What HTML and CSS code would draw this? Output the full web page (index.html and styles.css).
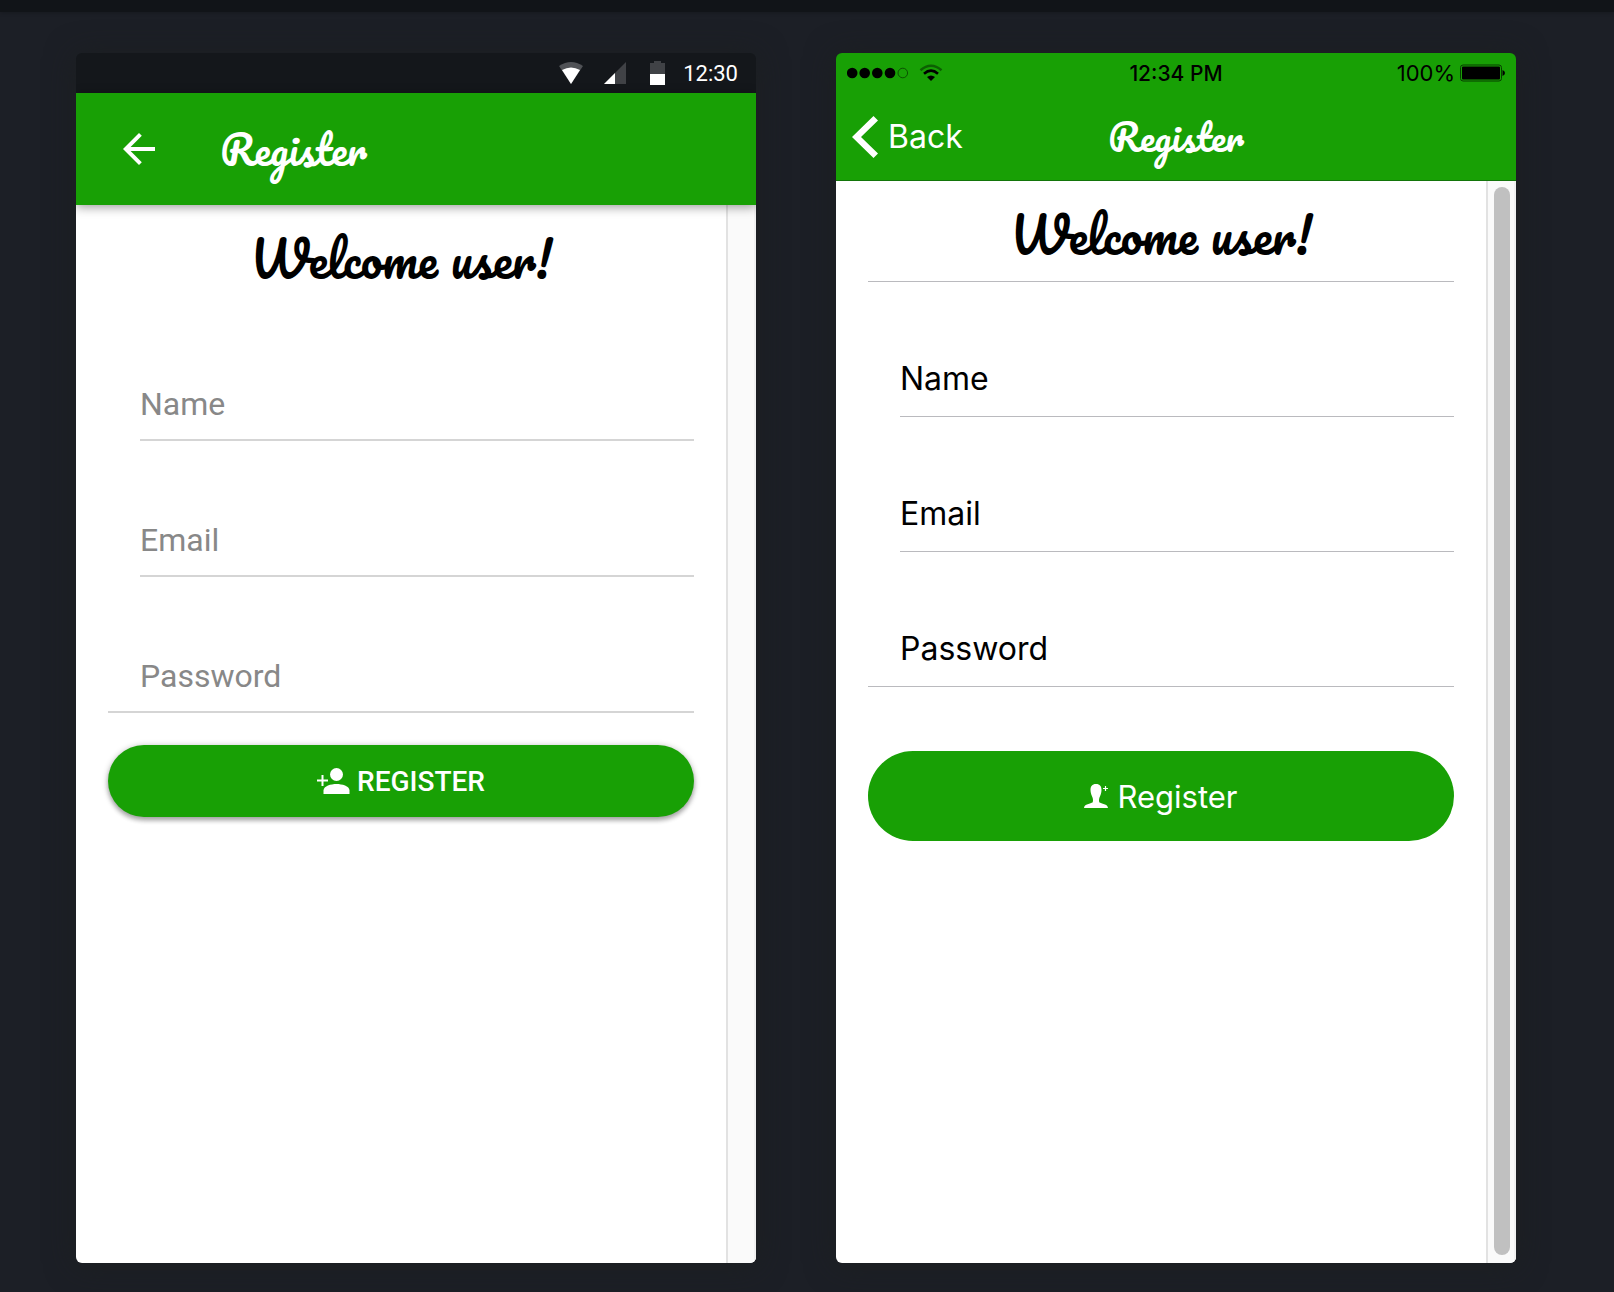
FILE: index.html
```html
<!DOCTYPE html>
<html lang="en">
<head>
    <meta charset="UTF-8">
    <meta name="viewport" content="width=device-width, initial-scale=1.0">
    <title>Register</title>
    <link rel="stylesheet" href="styles.css">
</head>
<body>
    <div class="topbar"></div>

    <main class="preview">
        <!-- Android -->
        <section class="phone android">
            <div class="status-bar">
                <svg class="status-wifi" width="26" height="24" viewBox="0 0 26 24">
                    <path d="M13 23 L1 5 Q13 -3 25 5 Z" fill="#505256"/>
                    <path d="M13 23 L4 9 Q13 4 22 9 Z" fill="#fff"/>
                </svg>
                <svg class="status-signal" width="22" height="22" viewBox="0 0 22 22">
                    <path d="M0 22 L22 0 V22 Z" fill="#404246"/>
                    <path d="M0 22 L11 11 V22 Z" fill="#fff"/>
                </svg>
                <svg class="status-battery" width="15" height="24" viewBox="0 0 15 24">
                    <path d="M0 2 H4 V0 H11 V2 H15 V13 H0 Z" fill="#404246"/>
                    <path d="M0 13 H15 V24 H0 Z" fill="#fff"/>
                </svg>
                <span class="status-time">12:30</span>
            </div>

            <header class="toolbar">
                <button type="button" class="back-button" aria-label="Back">
                    <svg width="48" height="48" viewBox="0 0 24 24">
                        <path d="M20 11H7.8l5.6-5.6L12 4l-8 8 8 8 1.4-1.4L7.8 13H20v-2z" fill="#fff"/>
                    </svg>
                </button>
                <h1 class="toolbar-title">Register</h1>
            </header>

            <div class="page">
                <form class="content">
                    <h2 class="welcome">Welcome user!</h2>
                    <div class="field">
                        <label for="md-name">Name</label>
                        <input type="text" id="md-name">
                    </div>
                    <div class="field">
                        <label for="md-email">Email</label>
                        <input type="email" id="md-email">
                    </div>
                    <div class="field">
                        <label for="md-password">Password</label>
                        <input type="password" id="md-password">
                    </div>
                    <button type="button" class="register-button">
                        <svg width="33" height="26" viewBox="0 0 33 26">
                            <circle cx="19.500" cy="6.500" r="6.500" fill="#fff"/>
                            <path d="M6.500 26 V22.500 C6.500 18 14 16 19.500 16 S32.500 18 32.500 22.500 V26 Z" fill="#fff"/>
                            <path d="M5.500 7 V18 M0 12.500 H11" stroke="#fff" stroke-width="2"/>
                        </svg>
                        REGISTER
                    </button>
                </form>
                <div class="gutter"></div>
            </div>
        </section>

        <!-- iOS -->
        <section class="phone ios">
            <div class="status-bar">
                <div class="status-left">
                    <svg width="62" height="12" viewBox="0 0 62 12">
                        <circle cx="5.200" cy="6" r="5.300"/>
                        <circle cx="17.700" cy="6" r="5.300"/>
                        <circle cx="30.300" cy="6" r="5.300"/>
                        <circle cx="43" cy="6" r="5.300"/>
                        <circle cx="55.800" cy="6" r="4.800" fill="none" stroke="#0c5203"/>
                    </svg>
                    <svg width="24" height="18" viewBox="0 0 24 18" fill="none">
                        <path d="M1.500 6.300 Q12 -2.700 22.500 6.300" stroke="#0d6003" stroke-width="2.500"/>
                        <path d="M5 9.700 Q12 3.700 19 9.700" stroke="#000" stroke-width="2.600"/>
                        <path d="M12 17 L8 13 Q12 10 16 13 Z" fill="#000"/>
                    </svg>
                </div>
                <span class="status-time">12:34 PM</span>
                <div class="status-right">
                    <span>100%</span>
                    <svg width="45" height="18" viewBox="0 0 45 18">
                        <rect x="0.500" y="1" width="41" height="16" rx="2.500" fill="none" stroke="#063d01"/>
                        <rect x="2" y="2.500" width="38" height="13" rx="1"/>
                        <path d="M42.500 6 Q45 7 45 9 T42.500 12 Z"/>
                    </svg>
                </div>
            </div>

            <header class="toolbar">
                <button type="button" class="back-button">
                    <svg width="26" height="42" viewBox="0 0 26 42">
                        <path d="M21.500 0 L26 4.500 L9 21 L26 37.500 L21.500 42 L0 21 Z" fill="#fff"/>
                    </svg>
                    Back
                </button>
                <h1 class="toolbar-title">Register</h1>
            </header>

            <div class="page">
                <form class="content">
                    <h2 class="welcome">Welcome user!</h2>
                    <div class="field">
                        <label for="ios-name">Name</label>
                        <input type="text" id="ios-name">
                    </div>
                    <div class="field">
                        <label for="ios-email">Email</label>
                        <input type="email" id="ios-email">
                    </div>
                    <div class="field">
                        <label for="ios-password">Password</label>
                        <input type="password" id="ios-password">
                    </div>
                    <button type="button" class="register-button">
                        <svg width="24" height="24" viewBox="0 0 24 24">
                            <path d="M12 0 C8 0 6.500 2.500 6.500 6 C6.500 9 7.500 11 8.500 13.500 C9.300 15.500 9 18 8.500 18.500 C7 19.500 0 20 0 24 H24 C24 20 17 19.500 15.500 18.500 C15 18 14.700 15.500 15.500 13.500 C16.500 11 17.500 9 17.500 6 C17.500 2.500 16 0 12 0 Z" fill="#fff"/>
                            <path d="M21.500 2 V7 M19 4.500 H24" stroke="#fff" stroke-width="1.200"/>
                        </svg>
                        Register
                    </button>
                </form>
                <div class="gutter">
                    <div class="thumb"></div>
                </div>
            </div>
        </section>
    </main>
</body>
</html>
```

FILE: styles.css
```css
:root {
    --green: #18a005;
    --dark: #1c1f26;
    --script: Pacifico, cursive;
}

* {
    box-sizing: border-box;
}

body {
    margin: 0;
    min-height: 100vh;
    display: flex;
    flex-direction: column;
    background-color: var(--dark);
    color: #000;
}

h1,
h2 {
    margin: 0;
    font-family: var(--script);
    font-weight: 400;
}

button,
input {
    font: inherit;
    border: none;
    padding: 0;
    background: none;
    color: inherit;
}

svg {
    display: block;
    flex: none;
}

.topbar {
    height: 12px;
    background-color: #111418;
    box-shadow: 0 1px 4px rgba(0, 0, 0, 0.2);
}

.preview {
    flex: 1;
    display: flex;
    gap: 80px;
    padding: 41px 98px 29px 76px;
}

.phone {
    flex: 1;
    min-width: 0;
    display: flex;
    flex-direction: column;
    border-radius: 6px;
    overflow: hidden;
    box-shadow: 0 2px 30px rgba(28, 32, 30, 0.7);
}

.android {
    font-family: Roboto, sans-serif;
}

.ios {
    font-family: Inter, sans-serif;
}

/* Status bars */
.status-bar {
    height: 40px;
    align-items: center;
    font-size: 22px;
}

.android .status-bar {
    display: flex;
    justify-content: flex-end;
    padding-right: 18px;
    background-color: #14171b;
    color: #fff;
}

.status-signal {
    margin-left: 20px;
}

.status-battery {
    margin-left: 24px;
}

.android .status-time {
    margin-left: 18px;
}

.ios .status-bar {
    display: grid;
    grid-template-columns: 1fr auto 1fr;
    padding: 0 11px;
    background-color: var(--green);
    font-size: 21px;
}

.ios .status-time {
    font-weight: 500;
}

.status-left,
.status-right {
    display: flex;
    align-items: center;
    gap: 10px;
}

.status-right {
    justify-content: flex-end;
    gap: 5px;
    font-size: 22px;
}

/* Toolbars */
.toolbar {
    background-color: var(--green);
    color: #fff;
    align-items: center;
}

.android .toolbar {
    display: flex;
    height: 112px;
    padding-left: 39px;
    gap: 57px;
    box-shadow: 0 2px 10px rgba(0, 0, 0, 0.4);
    z-index: 1;
}

.ios .toolbar {
    display: grid;
    grid-template-columns: 1fr auto 1fr;
    height: 88px;
    padding: 0 16px;
    border-bottom: 1px solid #13750a;
    font-size: 32px;
}

.toolbar-title {
    font-size: 40px;
}

.ios .toolbar-title {
    font-size: 37px;
    font-weight: 600;
}

.back-button {
    display: flex;
    align-items: center;
    gap: 10px;
    cursor: pointer;
}

/* Page body */
.page {
    flex: 1;
    display: flex;
    background-color: #fff;
}

.content {
    flex: 1;
    min-width: 0;
    padding: 0 32px;
}

.welcome {
    padding-top: 8px;
    font-size: 48px;
    line-height: 92px;
    text-align: center;
}

.ios .welcome {
    border-bottom: 1px solid #bababe;
}

.field {
    display: grid;
    margin-left: 32px;
    padding: 79px 0 15px;
    border-bottom: 2px solid #d5d5d5;
    font-size: 32px;
    line-height: 40px;
}

/* the label sits inside the empty box */
.field label,
.field input {
    grid-area: 1 / 1;
    min-width: 0;
    height: 40px;
}

.field input {
    outline: none;
}

.field:last-of-type {
    margin-left: 0;
    padding-left: 32px;
}

.android .field label {
    color: #888;
}

.ios .field {
    padding-top: 77px;
    padding-bottom: 17px;
    border-bottom: 1px solid #bababe;
}

.register-button {
    display: flex;
    align-items: center;
    justify-content: center;
    gap: 7px;
    width: 100%;
    height: 72px;
    margin-top: 32px;
    border-radius: 45px;
    background-color: var(--green);
    color: #fff;
    font-size: 28px;
    font-weight: 500;
    cursor: pointer;
}

.android .register-button {
    box-shadow: 0 4px 4px rgba(0, 0, 0, 0.2), 0 1px 6px rgba(0, 0, 0, 0.3);
}

.ios .register-button {
    gap: 9px;
    height: 90px;
    margin-top: 64px;
    font-size: 31px;
    font-weight: 400;
}

/* Scrollbar track */
.gutter {
    display: flex;
    justify-content: flex-end;
    width: 30px;
    padding: 6px 4px 8px 0;
    border-left: 2px solid #e2e2e2;
    border-right: 2px solid #f1f1f1;
    background-color: #fafafa;
}

.thumb {
    width: 16px;
    border-radius: 8px;
    background-color: #c0c0c0;
}

@media (max-width: 900px) {
    .preview {
        flex-direction: column;
        padding: 20px;
        gap: 40px;
    }
}
```
